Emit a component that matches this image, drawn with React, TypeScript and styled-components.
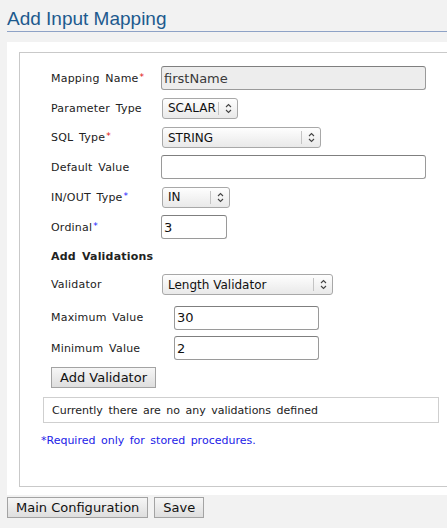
import styled, { createGlobalStyle } from 'styled-components';

const GlobalStyle = createGlobalStyle`
  html, body {
    margin: 0;
    padding: 0;
    background: #f2f2f2;
    overflow: hidden;
  }
  body {
    font-family: "DejaVu Sans", Verdana, sans-serif;
  }
`;

const Page = styled.div`
  padding-left: 7px;
  height: 528px;
`;

const Title = styled.h2`
  margin: 0;
  padding: 8px 0 1px;
  line-height: 22px;
  font-family: "Liberation Sans", Arial, sans-serif;
  font-size: 19px;
  font-weight: normal;
  color: #1d5a8e;
  border-bottom: 1px solid #8ea2c6;
`;

const Panel = styled.div`
  margin-top: 10px;
  background: #fff;
  padding: 10px 0 8px 12px;
`;

const Box = styled.div`
  border: 1px solid #c9c9c9;
  margin-right: -12px;
  padding: 10px 0 39px 23px;
`;

const Row = styled.div<{ $h: number; $labelWidth?: number }>`
  display: grid;
  grid-template-columns: ${(p) => p.$labelWidth ?? 110}px auto;
  align-items: center;
  height: ${(p) => p.$h}px;
  padding-left: 8px;
`;

const Label = styled.label<{ $bold?: boolean }>`
  font-size: 11px;
  color: #222;
  font-weight: ${(p) => (p.$bold ? 'bold' : 'normal')};
  word-spacing: 2px;
  letter-spacing: 0.2px;
`;

const Star = styled.span<{ $blue?: boolean }>`
  color: ${(p) => (p.$blue ? '#1a1aff' : '#e01010')};
  font-size: 9px;
  vertical-align: 2px;
  margin-left: 1px;
`;

const TextInput = styled.input<{ $w: number; $readOnly?: boolean }>`
  box-sizing: border-box;
  width: ${(p) => p.$w}px;
  height: 24px;
  padding: 0 2px;
  border: 1px solid #9a9a9a;
  border-top-color: #7f7f7f;
  border-radius: 3px;
  background: ${(p) => (p.$readOnly ? '#ededed' : '#fff')};
  color: ${(p) => (p.$readOnly ? '#3a3a3a' : '#111')};
  font-family: "DejaVu Sans", Verdana, sans-serif;
  font-size: 13px;
  outline: none;
`;

const Select = styled.div<{ $w: number }>`
  box-sizing: border-box;
  margin-left: 1px;
  width: ${(p) => p.$w}px;
  height: 21px;
  display: flex;
  align-items: center;
  border: 1px solid #a8a8a8;
  border-radius: 3px;
  background: linear-gradient(#fefefe, #e9e9e9);
  font-size: 12px;
  color: #111;
`;

const SelectText = styled.span`
  flex: 1;
  padding-left: 5px;
  white-space: nowrap;
  overflow: hidden;
`;

const SelectArrow = styled.span`
  width: 18px;
  height: 13px;
  border-left: 1px solid #c4c4c4;
  display: flex;
  align-items: center;
  justify-content: center;
`;

const Button = styled.button`
  height: 21px;
  padding: 0 8px;
  border: 1px solid #a3a3a3;
  border-radius: 0;
  background: linear-gradient(#f6f6f6, #dedede);
  font-family: "DejaVu Sans", Verdana, sans-serif;
  font-size: 13px;
  color: #111;
`;

const ButtonRow = styled.div<{ $indent?: number }>`
  display: flex;
  gap: 6px;
  margin-top: ${(p) => p.$indent ?? 0}px;
`;

const ValidatorButtonRow = styled.div`
  margin-top: 8px;
  padding-left: 8px;
`;

const Message = styled.div`
  box-sizing: border-box;
  margin-top: 9px;
  width: 396px;
  height: 26px;
  border: 1px solid #cfcfcf;
  padding-left: 8px;
  display: flex;
  align-items: center;
  font-size: 11px;
  color: #222;
  word-spacing: 2px;
`;

const Note = styled.div`
  margin: 11px 0 0 -2px;
  line-height: 13px;
  font-size: 11px;
  color: #2222e8;
  word-spacing: 2px;
`;

const Chevrons = () => (
  <svg width="7" height="11" viewBox="0 0 7 11">
    <path d="M1 4 L3.5 1.5 L6 4 M1 7 L3.5 9.5 L6 7" fill="none" stroke="#444" strokeWidth="1.1" />
  </svg>
);

const Dropdown = ({ value, width }: { value: string; width: number }) => (
  <Select $w={width}>
    <SelectText>{value}</SelectText>
    <SelectArrow>
      <Chevrons />
    </SelectArrow>
  </Select>
);

const App = () => {
  return (
    <Page>
      <GlobalStyle />
      <Title>Add Input Mapping</Title>
      <Panel>
        <Box>
          <Row $h={30}>
            <Label>
              Mapping Name<Star>*</Star>
            </Label>
            <TextInput $w={265} $readOnly readOnly defaultValue="firstName" />
          </Row>
          <Row $h={30}>
            <Label>Parameter Type</Label>
            <Dropdown value="SCALAR" width={76} />
          </Row>
          <Row $h={29}>
            <Label>
              SQL Type<Star>*</Star>
            </Label>
            <Dropdown value="STRING" width={159} />
          </Row>
          <Row $h={30}>
            <Label>Default Value</Label>
            <TextInput $w={265} defaultValue="" />
          </Row>
          <Row $h={30}>
            <Label>
              IN/OUT Type<Star $blue>*</Star>
            </Label>
            <Dropdown value="IN" width={68} />
          </Row>
          <Row $h={30}>
            <Label>
              Ordinal<Star $blue>*</Star>
            </Label>
            <TextInput $w={66} defaultValue="3" />
          </Row>
          <Row $h={28}>
            <Label $bold>Add Validations</Label>
          </Row>
          <Row $h={29}>
            <Label>Validator</Label>
            <Dropdown value="Length Validator" width={171} />
          </Row>
          <Row $h={37} $labelWidth={123}>
            <Label>Maximum Value</Label>
            <TextInput $w={145} defaultValue="30" />
          </Row>
          <Row $h={23} $labelWidth={123}>
            <Label>Minimum Value</Label>
            <TextInput $w={145} defaultValue="2" />
          </Row>
          <ValidatorButtonRow>
            <Button>Add Validator</Button>
          </ValidatorButtonRow>
          <Message>Currently there are no any validations defined</Message>
          <Note>*Required only for stored procedures.</Note>
        </Box>
      </Panel>
      <ButtonRow $indent={2}>
        <Button>Main Configuration</Button>
        <Button>Save</Button>
      </ButtonRow>
    </Page>
  );
};

export default App;
